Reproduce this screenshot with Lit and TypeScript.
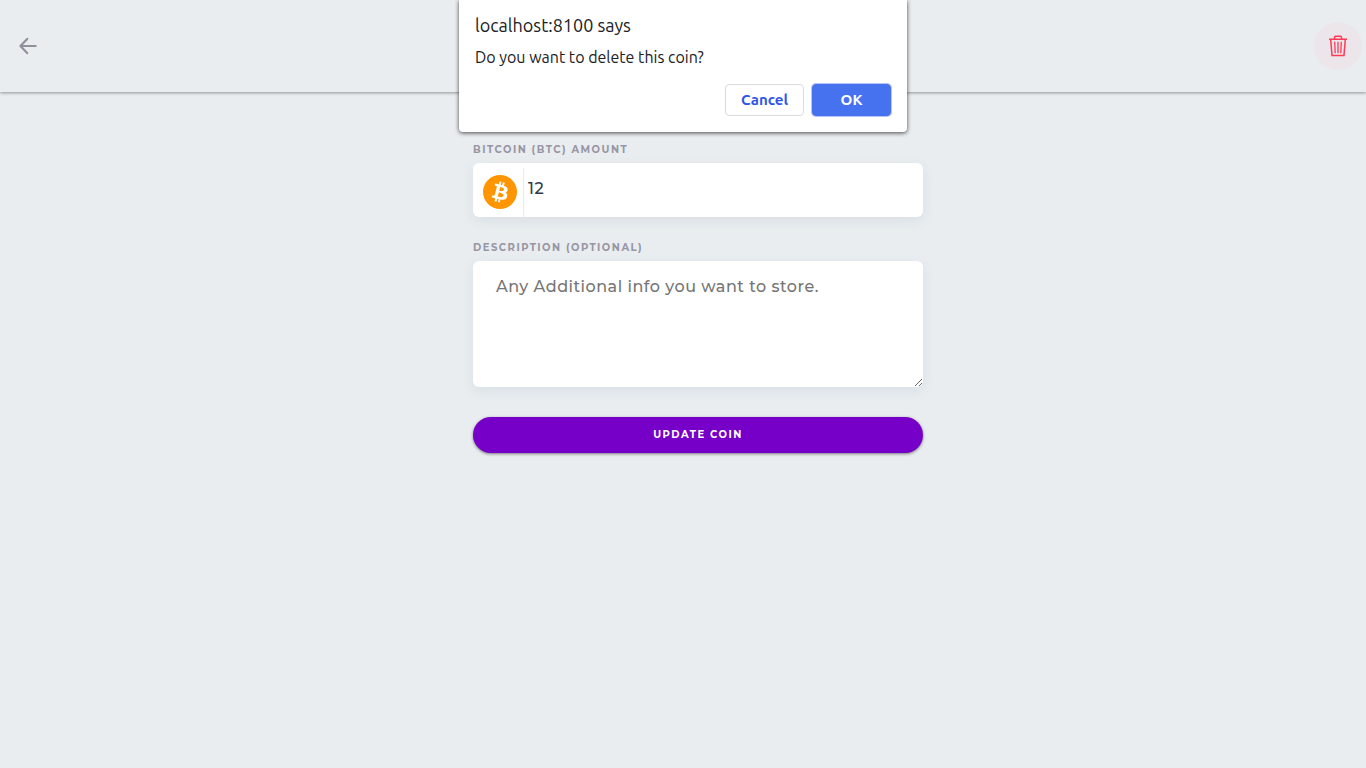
import { LitElement, html, css } from "lit";
import { customElement } from "lit/decorators.js";

@customElement("app-root")
export class AppRoot extends LitElement {
  static styles = css`
    :host {
      display: block;
      position: relative;
      min-height: 100vh;
      background: #e9edf0;
      color: #2f3a4a;
      font-family: Montserrat, Inter, "Liberation Sans", sans-serif;
    }
    * {
      box-sizing: border-box;
    }
    button,
    input,
    textarea {
      font: inherit;
      margin: 0;
    }
    .bar {
      display: flex;
      align-items: center;
      justify-content: space-between;
      height: 92px;
      padding: 0 4px;
      box-shadow: 0 1px 3px rgba(0, 0, 0, 0.38);
    }
    .icon {
      display: grid;
      place-items: center;
      width: 48px;
      height: 48px;
      padding: 0;
      border: 0;
      border-radius: 50%;
      background: none;
      color: #918f9c;
    }
    .remove {
      background: #ece6ea;
      color: #ff3b58;
    }
    .form {
      display: flex;
      flex-direction: column;
      max-width: 480px;
      margin: 0 auto;
      padding: 45px 0 0 30px;
    }
    .label {
      font-size: 10px;
      font-weight: 700;
      line-height: 26px;
      letter-spacing: 1.5px;
      text-transform: uppercase;
      color: #9796a3;
    }
    .field {
      display: flex;
      height: 54px;
      margin-bottom: 18px;
      background: #fff;
      border-radius: 6px;
      box-shadow: 0 4px 12px rgba(150, 170, 190, 0.2);
    }
    .coin {
      display: flex;
      padding: 7px 6px 0 10px;
      height: 50px;
      margin-top: 5px;
      border-right: 1px solid #e7eaee;
    }
    .amount {
      flex: 1;
      min-width: 0;
      height: 50px;
      padding: 0 4px;
      border: 0;
      outline: 0;
      background: none;
      color: #2f3a4a;
      font-size: 16px;
      font-weight: 500;
      letter-spacing: 0.5px;
    }
    .notes {
      display: block;
      width: 100%;
      height: 126px;
      margin-bottom: 30px;
      padding: 16px 23px;
      border: 0;
      outline: 0;
      border-radius: 6px;
      background: #fff;
      box-shadow: 0 4px 12px rgba(150, 170, 190, 0.2);
      font-size: 16px;
      font-weight: 500;
      line-height: 20px;
      letter-spacing: 0.5px;
      resize: vertical;
    }
    .notes::placeholder {
      color: #757575;
    }
    .update {
      height: 36px;
      padding: 0 0 2px;
      border: 0;
      border-radius: 18px;
      background: #7600c8;
      box-shadow: 0 1px 3px rgba(0, 0, 0, 0.5);
      color: #fff;
      font-size: 10px;
      font-weight: 700;
      letter-spacing: 1.5px;
      text-transform: uppercase;
    }
    .prompt {
      position: absolute;
      top: 0;
      left: 0;
      right: 0;
      width: 448px;
      margin: 0 auto;
      padding: 13px 16px 16px;
      border: 0;
      border-radius: 0 0 4px 4px;
      background: #fff;
      box-shadow: 0 1px 4px rgba(0, 0, 0, 0.7);
      color: #202124;
      font-family: Ubuntu, "Noto Sans", "Open Sans", sans-serif;
    }
    .origin {
      margin: 0 0 9px;
      font-size: 18px;
      font-weight: 400;
      line-height: 24px;
    }
    .message {
      margin: 0 0 16px;
      font-size: 16px;
      line-height: 22px;
    }
    .actions {
      display: flex;
      justify-content: flex-end;
      gap: 8px;
    }
    .choice {
      width: 79px;
      height: 32px;
      padding: 0 0 2px;
      border: 1px solid #dadce0;
      border-radius: 4px;
      background: #fff;
      color: #2f55e8;
      font-size: 15px;
      font-weight: 600;
    }
    .accept {
      border-color: #4772ef;
      background: #4772ef;
      box-shadow: 0 0 0 1px #b5c4f6;
      color: #fff;
    }
  `;

  render() {
    return html`
      <header class="bar">
        <button class="icon" type="button" aria-label="Back">
          <svg width="20" height="20" viewBox="0 0 20 20" fill="none" stroke="currentColor" stroke-width="2.2" stroke-linecap="round" stroke-linejoin="round">
            <path d="M17.7 10H2.8M9.2 2.9 2.4 10l6.8 7.1" />
          </svg>
        </button>
        <button class="icon remove" type="button" aria-label="Delete coin">
          <svg width="20" height="24" viewBox="0 0 20 24" fill="none" stroke="currentColor" stroke-width="1.5">
            <path d="M1 5.3h18M6.5 5V3.4c0-.7.4-1.1 1.1-1.1h4.8c.7 0 1.1.4 1.1 1.1V5M2.7 5.3l1.3 16.1h12l1.3-16.1" />
            <path stroke-width="1.3" d="M10 7.8v11.4M6.7 7.8l.5 11.4M13.3 7.8l-.5 11.4" />
          </svg>
        </button>
      </header>

      <form class="form">
        <label class="label" for="amount">Bitcoin (BTC) amount</label>
        <div class="field">
          <span class="coin">
            <svg width="34" height="34" viewBox="0 0 32 32" aria-hidden="true">
              <circle cx="16" cy="16" r="16" fill="#ff9500" />
              <path fill="#fff" d="M23.189 14.02c.314-2.096-1.283-3.223-3.465-3.975l.708-2.84-1.728-.43-.69 2.765c-.454-.114-.92-.22-1.385-.326l.695-2.783L15.596 6l-.708 2.839c-.376-.086-.746-.17-1.104-.26l.002-.009-2.384-.595-.46 1.846s1.283.294 1.256.312c.7.175.826.638.805 1.006l-.806 3.235c.048.012.11.03.18.057l-.183-.045-1.13 4.532c-.086.212-.303.531-.793.41.018.025-1.256-.313-1.256-.313l-.858 1.978 2.25.561c.418.105.828.215 1.231.318l-.715 2.872 1.727.43.708-2.84c.472.127.93.245 1.378.357l-.706 2.828 1.728.43.715-2.866c2.948.558 5.164.333 6.097-2.333.752-2.146-.037-3.385-1.588-4.192 1.13-.26 1.98-1.003 2.207-2.538zm-3.95 5.538c-.533 2.147-4.148.986-5.32.695l.95-3.805c1.172.293 4.929.872 4.37 3.11zm.535-5.569c-.487 1.953-3.495.96-4.47.717l.86-3.45c.975.243 4.118.696 3.61 2.733z" />
            </svg>
          </span>
          <input class="amount" id="amount" type="text" inputmode="decimal" value="12" />
        </div>
        <label class="label" for="notes">Description (optional)</label>
        <textarea class="notes" id="notes" placeholder="Any Additional info you want to store."></textarea>
        <button class="update" type="button">Update coin</button>
      </form>

      <dialog class="prompt" open aria-labelledby="origin">
        <h1 class="origin" id="origin">localhost:8100 says</h1>
        <p class="message">Do you want to delete this coin?</p>
        <div class="actions">
          <button class="choice" type="button">Cancel</button>
          <button class="choice accept" type="button">OK</button>
        </div>
      </dialog>
    `;
  }
}
